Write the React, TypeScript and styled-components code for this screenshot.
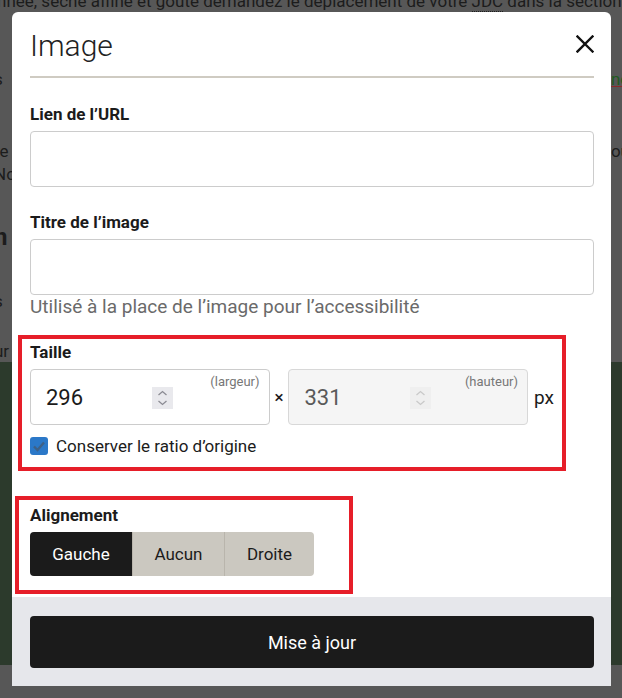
import React from 'react';
import styled, { createGlobalStyle } from 'styled-components';

const GlobalStyle = createGlobalStyle`
  html, body {
    margin: 0;
    padding: 0;
    width: 100%;
    height: 100%;
    overflow: hidden;
    font-family: Roboto, "Liberation Sans", Arial, sans-serif;
  }
  * { box-sizing: border-box; }
`;

// page behind the dimmed backdrop
const Page = styled.div`
  position: fixed;
  inset: 0;
  background: #575757;
  color: #1c1c1c;
  font-size: 17px;
  overflow: hidden;
  display: flex;
  flex-direction: column;
`;

const PageLine = styled.div<{ $h: number; $bg?: string }>`
  height: ${(p) => p.$h}px;
  background: ${(p) => p.$bg || 'transparent'};
  display: flex;
  justify-content: space-between;
  align-items: center;
  white-space: nowrap;
  overflow: hidden;
`;

const TopText = styled.span`
  margin-top: -12px;
  margin-left: -3px;
  font-size: 17px;

  abbr {
    text-decoration: none;
    border-bottom: 1px dotted #1c1c1c;
  }
`;

const SideLink = styled.span`
  color: #1f5a1f;
  text-decoration: underline;
  text-decoration-color: #8a2a2a;
  margin-right: -8px;
`;

const Side = styled.span<{ $bold?: boolean }>`
  font-weight: ${(p) => (p.$bold ? 700 : 400)};
  font-size: ${(p) => (p.$bold ? '24px' : '17px')};
  margin-left: -6px;
  margin-right: -8px;
`;

// modal
const Overlay = styled.div`
  position: fixed;
  inset: 0;
  padding: 12px 11px 0 12px;
`;

const Modal = styled.div`
  width: 599px;
  height: 674px;
  background: #fff;
  border-radius: 6px 6px 0 0;
  display: flex;
  flex-direction: column;
  color: #1b1b1b;
`;

const Body = styled.div`
  flex: 1;
  padding: 0 17px 0 18px;
  display: flex;
  flex-direction: column;
`;

const Header = styled.div`
  height: 66px;
  display: flex;
  align-items: center;
  justify-content: space-between;
  border-bottom: 2px solid #cfcbc2;
`;

const Title = styled.h1`
  margin: 0;
  font-size: 30px;
  font-weight: 300;
  color: #222;
  padding-top: 2px;
`;

const CloseButton = styled.button`
  border: 0;
  background: none;
  padding: 0;
  width: 18px;
  height: 18px;
  display: flex;
  cursor: pointer;
`;

const Field = styled.div<{ $top: number }>`
  margin-top: ${(p) => p.$top}px;
  display: flex;
  flex-direction: column;
`;

const Label = styled.label`
  font-size: 17px;
  font-weight: 700;
  line-height: 20px;
  color: #1b1b1b;
  margin-bottom: 7px;
`;

const TextInput = styled.input`
  height: 56px;
  width: 100%;
  border: 1px solid #cccccc;
  border-radius: 4px;
  font: inherit;
  font-size: 18px;
  padding: 0 14px;
  outline: none;
`;

const Help = styled.div`
  font-size: 19px;
  line-height: 22px;
  color: #6a6a6a;
  margin-top: 1px;
`;

const Highlight = styled.div<{ $top: number; $left: number; $width: number; $pad: string }>`
  margin-top: ${(p) => p.$top}px;
  margin-left: ${(p) => p.$left}px;
  width: ${(p) => p.$width}px;
  border: 4px solid #e61e29;
  padding: ${(p) => p.$pad};
  display: flex;
  flex-direction: column;
`;

const SizeRow = styled.div`
  display: flex;
  align-items: center;
`;

const NumberBox = styled.div<{ $disabled?: boolean }>`
  position: relative;
  width: 240px;
  height: 56px;
  border: 1px solid ${(p) => (p.$disabled ? '#d8d8d8' : '#cccccc')};
  border-radius: 4px;
  background: ${(p) => (p.$disabled ? '#f5f5f5' : '#fff')};
  color: ${(p) => (p.$disabled ? '#5a5a5a' : '#1b1b1b')};
  display: flex;
  align-items: center;
  padding-left: 15px;
  font-size: 22px;
`;

const Hint = styled.span`
  position: absolute;
  top: 4px;
  right: 9px;
  font-size: 13px;
  color: #777;
`;

const Spinner = styled.span<{ $disabled?: boolean }>`
  position: absolute;
  left: 121px;
  top: 17px;
  width: 21px;
  height: 22px;
  background: ${(p) => (p.$disabled ? '#efefef' : '#e9e9ed')};
  display: flex;
  align-items: center;
  justify-content: center;
`;

const Times = styled.span`
  width: 19px;
  text-align: center;
  font-size: 17px;
  font-weight: 500;
`;

const Unit = styled.span`
  margin-left: 6px;
  font-size: 19px;
`;

const CheckRow = styled.label`
  margin-top: 11px;
  display: flex;
  align-items: center;
  gap: 8px;
  font-size: 17px;
  line-height: 20px;
`;

const ButtonGroup = styled.div`
  display: flex;
  height: 44px;
  border-radius: 4px;
  overflow: hidden;
  width: fit-content;
`;

const AlignButton = styled.button<{ $active?: boolean; $w: number }>`
  width: ${(p) => p.$w}px;
  border: 0;
  border-left: 1px solid ${(p) => (p.$active ? '#1b1b1b' : '#b9b5ac')};
  background: ${(p) => (p.$active ? '#1b1b1b' : '#cbc8c0')};
  color: ${(p) => (p.$active ? '#fff' : '#1b1b1b')};
  font: inherit;
  font-size: 17px;
  font-weight: 400;
  padding: 0;
  cursor: pointer;

  &:first-child { border-left: 0; }
`;

const Footer = styled.div`
  background: #e6e7eb;
  padding: 19px 17px 18px 18px;
`;

const SubmitButton = styled.button`
  width: 100%;
  height: 52px;
  border: 0;
  border-radius: 4px;
  background: #1b1b1b;
  color: #fff;
  font: inherit;
  font-size: 18px;
  cursor: pointer;
`;

const CloseIcon = () => (
  <svg width="18" height="18" viewBox="0 0 18 18">
    <path d="M1.5 1.5 L16.5 16.5 M16.5 1.5 L1.5 16.5" stroke="#111" strokeWidth="2.4" strokeLinecap="square" />
  </svg>
);

const SpinIcon = ({ color }: { color: string }) => (
  <svg width="11" height="18" viewBox="0 0 11 18">
    <path d="M1.5 6 L5.5 2.5 L9.5 6 M1.5 12 L5.5 15.5 L9.5 12" fill="none" stroke={color} strokeWidth="1.3" />
  </svg>
);

const CheckIcon = () => (
  <svg width="18" height="18" viewBox="0 0 18 18">
    <rect x="0" y="0" width="18" height="18" rx="3" fill="#2b78c8" />
    <path d="M4 9.5 L7.5 13 L14 5.5" fill="none" stroke="#3e6187" strokeWidth="2.4" />
  </svg>
);

const App = () => {
  return (
    <>
      <GlobalStyle />
      <Page>
        <PageLine $h={14}>
          <TopText>
            nnée, sèche affine et goûte demandez le déplacement de votre <abbr>JDC</abbr> dans la section
          </TopText>
        </PageLine>
        <PageLine $h={54} />
        <PageLine $h={22}>
          <Side>s</Side>
          <SideLink>no</SideLink>
        </PageLine>
        <PageLine $h={50} />
        <PageLine $h={22}>
          <Side>re</Side>
          <Side>ou</Side>
        </PageLine>
        <PageLine $h={24}>
          <Side>No</Side>
        </PageLine>
        <PageLine $h={36} />
        <PageLine $h={30}>
          <Side $bold>n</Side>
        </PageLine>
        <PageLine $h={38} />
        <PageLine $h={22}>
          <Side>s</Side>
        </PageLine>
        <PageLine $h={28} />
        <PageLine $h={22}>
          <Side>ur</Side>
        </PageLine>
        <PageLine $h={303} $bg="#2c3a2c" />
        <PageLine $h={33}>
          <Side>&nbsp;</Side>
        </PageLine>
      </Page>

      <Overlay>
        <Modal>
          <Body>
            <Header>
              <Title>Image</Title>
              <CloseButton aria-label="Fermer">
                <CloseIcon />
              </CloseButton>
            </Header>

            <Field $top={26}>
              <Label>Lien de l’URL</Label>
              <TextInput />
            </Field>

            <Field $top={25}>
              <Label>Titre de l’image</Label>
              <TextInput />
              <Help>Utilisé à la place de l’image pour l’accessibilité</Help>
            </Field>

            <Highlight $top={17} $left={-12} $width={548} $pad="3px 8px 11px 8px">
              <Label>Taille</Label>
              <SizeRow>
                <NumberBox>
                  296
                  <Spinner>
                    <SpinIcon color="#8c8c94" />
                  </Spinner>
                  <Hint>(largeur)</Hint>
                </NumberBox>
                <Times>×</Times>
                <NumberBox $disabled>
                  331
                  <Spinner $disabled>
                    <SpinIcon color="#c9c9c9" />
                  </Spinner>
                  <Hint>(hauteur)</Hint>
                </NumberBox>
                <Unit>px</Unit>
              </SizeRow>
              <CheckRow>
                <CheckIcon />
                Conserver le ratio d’origine
              </CheckRow>
            </Highlight>

            <Highlight $top={25} $left={-15} $width={338} $pad="5px 8px 14px 11px">
              <Label>Alignement</Label>
              <ButtonGroup>
                <AlignButton $active $w={102}>Gauche</AlignButton>
                <AlignButton $w={92}>Aucun</AlignButton>
                <AlignButton $w={90}>Droite</AlignButton>
              </ButtonGroup>
            </Highlight>
          </Body>

          <Footer>
            <SubmitButton>Mise à jour</SubmitButton>
          </Footer>
        </Modal>
      </Overlay>
    </>
  );
};

export default App;
